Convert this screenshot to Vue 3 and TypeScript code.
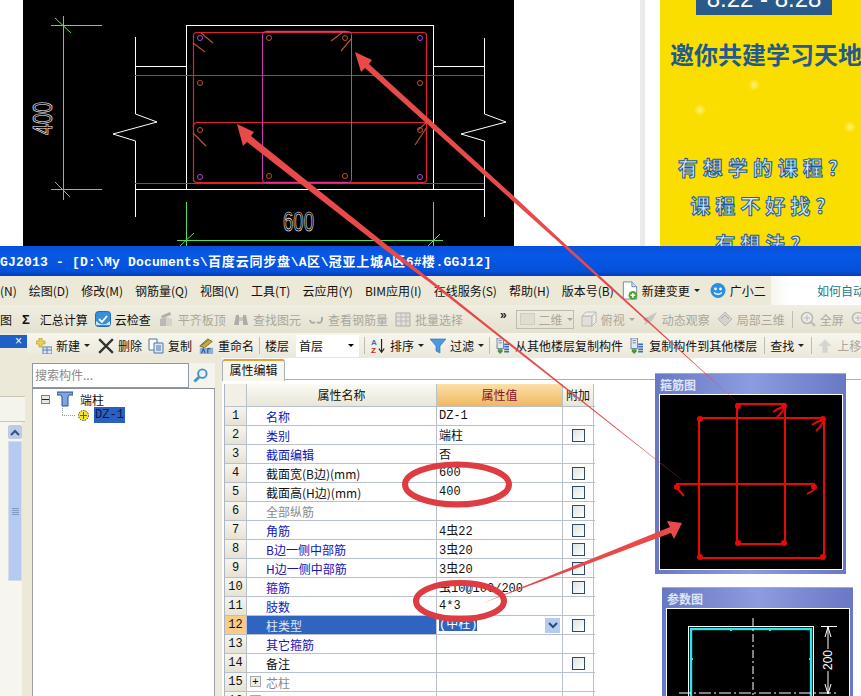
<script setup lang="ts">
interface Tool { icon?: string; label?: string; caret?: boolean; off?: boolean; sep?: boolean; wide?: boolean; nudge?: boolean }
interface Row { n: number; name: string; val?: string; check?: boolean; kind?: string; tree?: boolean }

const menus = ['(N)', '绘图(D)', '修改(M)', '钢筋量(Q)', '视图(V)', '工具(T)', '云应用(Y)', 'BIM应用(I)', '在线服务(S)', '帮助(H)', '版本号(B)']

const toolsA: Tool[] = [
  { icon: 'i-cloud', label: '云检查' },
  { icon: 'i-level', label: '平齐板顶', off: true },
  { icon: 'i-bino', label: '查找图元', off: true },
  { icon: 'i-link', label: '查看钢筋量', off: true },
  { icon: 'i-batch', label: '批量选择', off: true }
]
const toolsB: Tool[] = [
  { icon: 'i-box', label: '俯视', caret: true, off: true },
  { icon: 'i-rocket', label: '动态观察', off: true },
  { icon: 'i-gem', label: '局部三维', off: true },
  { sep: true },
  { icon: 'i-zoom', label: '全屏', off: true },
  { icon: 'i-zoom', off: true }
]
const toolsC: Tool[] = [
  { icon: 'i-new', label: '新建', caret: true },
  { icon: 'i-x', label: '删除', nudge: true },
  { icon: 'i-copy', label: '复制' },
  { icon: 'i-rename', label: '重命名' },
  { sep: true },
  { label: '楼层' }
]
const toolsD: Tool[] = [
  { sep: true },
  { icon: 'i-az', label: '排序', caret: true },
  { icon: 'i-funnel', label: '过滤', caret: true },
  { sep: true },
  { icon: 'i-from', label: '从其他楼层复制构件' },
  { icon: 'i-from', label: '复制构件到其他楼层' },
  { sep: true, wide: true },
  { label: '查找', caret: true },
  { sep: true, wide: true },
  { icon: 'i-up', label: '上移', off: true }
]

const rows: Row[] = [
  { n: 1, name: '名称', val: 'DZ-1', kind: 'blue' },
  { n: 2, name: '类别', val: '端柱', check: true, kind: 'blue' },
  { n: 3, name: '截面编辑', val: '否', kind: 'blue' },
  { n: 4, name: '截面宽(B边)(mm)', val: '600', check: true },
  { n: 5, name: '截面高(H边)(mm)', val: '400', check: true },
  { n: 6, name: '全部纵筋', check: true, kind: 'gray' },
  { n: 7, name: '角筋', val: '4虫22', check: true, kind: 'blue' },
  { n: 8, name: 'B边一侧中部筋', val: '3虫20', check: true, kind: 'blue' },
  { n: 9, name: 'H边一侧中部筋', val: '3虫20', check: true, kind: 'blue' },
  { n: 10, name: '箍筋', val: '虫10@100/200', check: true, kind: 'blue' },
  { n: 11, name: '肢数', val: '4*3', kind: 'blue' },
  { n: 12, name: '柱类型', val: '(中柱)', check: true, kind: 'sel' },
  { n: 13, name: '其它箍筋', kind: 'blue' },
  { n: 14, name: '备注', check: true },
  { n: 15, name: '芯柱', kind: 'gray', tree: true },
  { n: 16, name: '', tree: true }
]

const purpleBars = [[200, 38], [420, 38], [200, 177], [420, 177]]
const orangeBars = [[269, 38], [345, 38], [200, 83], [420, 83], [200, 130], [420, 130], [269, 176], [345, 176]]
const hooks = [
  'M201 33 L213 43', 'M193 43 L205 52', 'M343 32 L331 41', 'M352 38 L341 51',
  'M193 133 L206 146', 'M427 127 L415 145', 'M427 122 L418 130'
]
const dots = [[40, 24], [163, 24], [40, 162], [163, 162], [78, 11], [124, 11], [78, 148], [124, 148], [17, 92], [154, 92]]
</script>

<template>
  <div class="page">
    <svg class="defs" width="0" height="0">
      <symbol id="i-doc" viewBox="0 0 16 20"><path d="M1 1h9l5 5v13H1z" fill="#fff" stroke="#6c86b0"/><path d="M10 1v5h5" fill="#cfe0f5" stroke="#6c86b0"/><circle cx="11" cy="15" r="4.5" fill="#4da32f"/><path d="M8.5 15h5M11 12.5v5" stroke="#fff" stroke-width="1.6"/></symbol>
      <symbol id="i-face" viewBox="0 0 16 16"><circle cx="8" cy="8" r="7.5" fill="#2b8fe0"/><circle cx="5.5" cy="6.5" r="1.4" fill="#fff"/><circle cx="10.5" cy="6.5" r="1.4" fill="#fff"/><path d="M4 10q4 3.5 8 0" stroke="#fff" fill="none" stroke-width="1.3"/></symbol>
      <symbol id="i-cloud" viewBox="0 0 16 16"><rect x=".5" y=".5" width="15" height="15" rx="3" fill="#3a8fdc" stroke="#1d6cb8"/><path d="M1 10q7 7 14 0v4H1z" fill="#cfe6fa"/><path d="M4 8l3 3 5-6" stroke="#fff" stroke-width="1.8" fill="none"/></symbol>
      <symbol id="i-level" viewBox="0 0 16 16"><path d="M2 15V8l6-2v9z" fill="#aaa"/><path d="M8 15V6l6 2v7z" fill="#ccc"/><path d="M3 5l9-4 1 3-9 3z" fill="#999"/></symbol>
      <symbol id="i-bino" viewBox="0 0 16 16"><path d="M1 14l2-10h3v10zM10 14V4h3l2 10z" fill="#999"/><rect x="6" y="6" width="4" height="4" fill="#bbb"/></symbol>
      <symbol id="i-link" viewBox="0 0 16 16"><path d="M2 9a3 3 0 0 0 5 2M14 6v3a3 3 0 0 1-5 2" stroke="#999" stroke-width="2" fill="none"/></symbol>
      <symbol id="i-batch" viewBox="0 0 16 16"><path d="M1 2h14v13H1z" fill="#ddd" stroke="#999"/><path d="M1 6h14M1 10h14M6 2v13M11 2v13" stroke="#aaa"/></symbol>
      <symbol id="i-box" viewBox="0 0 16 16"><path d="M1 5h10v10H1z" fill="#ddd" stroke="#aaa"/><path d="M1 5l4-4h10l-4 4zM11 5l4-4v10l-4 4z" fill="#eee" stroke="#aaa"/></symbol>
      <symbol id="i-rocket" viewBox="0 0 16 16"><path d="M15 1L6 6l-4 8 8-4z" fill="#bbb"/><path d="M1 8l5-2-2 5z" fill="#999"/></symbol>
      <symbol id="i-gem" viewBox="0 0 16 16"><path d="M1 8l7-7 7 7-7 7z" fill="#ccc" stroke="#aaa"/><path d="M4 8l4-4 4 4" fill="none" stroke="#999"/></symbol>
      <symbol id="i-zoom" viewBox="0 0 16 16"><circle cx="7" cy="7" r="5.5" fill="#eee" stroke="#aaa" stroke-width="1.6"/><path d="M11 11l4 4" stroke="#aaa" stroke-width="2"/><path d="M4 7h6M7 4v6" stroke="#aaa"/></symbol>
      <symbol id="i-new" viewBox="0 0 16 16"><path d="M6 0h3v3h3v3H9v3H6V6H3V3h3z" transform="translate(-3 0)" fill="#f0d24a" stroke="#a98f20" stroke-width=".6"/><rect x="7" y="9" width="9" height="7" fill="#dce8f6" stroke="#5d7fae"/><path d="M7 12h9M11 9v7" stroke="#5d7fae"/></symbol>
      <symbol id="i-x" viewBox="0 0 14 14"><path d="M1 1l12 12M13 1L1 13" stroke="#333" stroke-width="2"/></symbol>
      <symbol id="i-copy" viewBox="0 0 16 16"><path d="M1 1h8v11H1z" fill="#fff" stroke="#4f74a8"/><path d="M6 5h9v10H6z" fill="#dce8f6" stroke="#4f74a8"/><path d="M8 8h5M8 10h5M8 12h5" stroke="#4f74a8"/></symbol>
      <symbol id="i-rename" viewBox="0 0 16 18"><path d="M1 9l9-8 5 3-9 7z" fill="#c9a93a" stroke="#7a6a20"/><path d="M3 8l8-6" stroke="#3d8a3d"/><rect x="1" y="11" width="15" height="7" fill="#8fb0d8"/><path d="M3 17l2-5 2 5M10 17v-5h3" stroke="#203a70" fill="none"/></symbol>
      <symbol id="i-az" viewBox="0 0 16 18"><text x="0" y="8" font-size="9" font-family="Liberation Sans" font-weight="700" fill="#3a6fc0">A</text><text x="0" y="17" font-size="9" font-family="Liberation Sans" font-weight="700" fill="#b03030">Z</text><path d="M12 1v14M9 12l3 4 3-4" stroke="#222" stroke-width="1.3" fill="none"/></symbol>
      <symbol id="i-funnel" viewBox="0 0 16 16"><path d="M0 1h16l-6 7v7l-4-2V8z" fill="#4a9ae0" stroke="#2a6cb0" stroke-width=".6"/></symbol>
      <symbol id="i-from" viewBox="0 0 17 20"><rect x="1" y="0" width="8" height="13" fill="#dfe7f3" stroke="#5d6f8e"/><path d="M3 3h4M3 6h4" stroke="#5d6f8e"/><path d="M10 8h6M10 11h6M10 14h6M10 17h6" stroke="#3c6cb0" stroke-width="2"/><path d="M2 14h6v3l-3 3-3-3z" fill="#3d9a3d"/></symbol>
      <symbol id="i-up" viewBox="0 0 12 12"><path d="M6 1l5 5H8v5H4V6H1z" fill="#ccc"/></symbol>
      <symbol id="i-search" viewBox="0 0 16 16"><circle cx="10" cy="6" r="4.5" fill="#e8f4fc" stroke="#3f90cf" stroke-width="2"/><path d="M6.5 9.5L1.5 14.5" stroke="#3f90cf" stroke-width="3"/></symbol>
    </svg>

    <div class="backdrop">
      <svg class="cad" viewBox="23 0 491 246" width="491" height="246">
        <g stroke="#fff" stroke-width="1" fill="none">
          <rect x="186.5" y="25.5" width="247" height="164" />
          <path d="M135.5 37V114L157 122 113 134 135.500 141V217" />
          <path d="M484.500 38V114L506 122 461 134 484.500 141V217" />
          <path d="M135 66.500H186M433 66.500H484M135 189.500H484" />
        </g>
        <g stroke="#55e055" stroke-width="1" fill="none">
          <path d="M63.500 16V200M51 25.500H102M51 189.500H102M55 18L71 33M55 182L70 197" />
          <path d="M186.500 202V246M433.500 202V246M177 240.500H443M180 246L194 233M428 246L440 234" />
        </g>
        <g stroke="#e0202c" stroke-width="1.200" fill="none">
          <rect x="193.500" y="32.500" width="233" height="150" rx="3" />
          <path d="M135 75.500H484M197 122.500H427M135 183.500H484" />
          <path d="M193 127Q194 122 199 122" />
          <path v-for="h in hooks" :key="h" :d="h" stroke="#b8503a" />
        </g>
        <rect x="262.500" y="31.500" width="89" height="151" rx="3" fill="none" stroke="#c83cb4" stroke-width="1" />
        <path d="M266 31.500H346M266 182.500H346" stroke="#f02c90" stroke-width="1.400" />
        <circle v-for="b in purpleBars" :key="'p' + b[0] + b[1]" :cx="b[0]" :cy="b[1]" r="2.500" fill="none" stroke="#a84ce0" stroke-width="1" />
        <circle v-for="b in orangeBars" :key="'o' + b[0] + b[1]" :cx="b[0]" :cy="b[1]" r="2.500" fill="none" stroke="#c8502c" stroke-width="1" />
        <text class="cad-text" x="283" y="231" textLength="31" lengthAdjust="spacingAndGlyphs">600</text>
        <text class="cad-text" transform="translate(52 135) rotate(-90)" x="0" y="0" textLength="33" lengthAdjust="spacingAndGlyphs">400</text>
      </svg>
      <div class="stripe"></div>
      <div class="ad">
        <div class="ad-date"><span>8.22 - 8.28</span></div>
        <div class="ad-head">邀你共建学习天地</div>
        <div class="ad-q first">有想学的课程?</div>
        <div class="ad-q">课程不好找?</div>
        <div class="ad-q">有想法?</div>
      </div>
    </div>

    <div class="window">
      <div class="title"><span class="lat">GJ2013 - [D:\My Documents\</span><span class="han">百度云同步盘</span><span class="lat">\A</span><span class="han">区</span><span class="lat">\</span><span class="han">冠亚上城</span><span class="lat">A</span><span class="han">区</span><span class="lat">6#</span><span class="han">楼</span><span class="lat">.GGJ12]</span></div>

      <div class="menubar">
        <div class="menu-left">
          <span v-for="m in menus" :key="m">{{ m }}</span>
          <span class="tool change"><svg class="ic big"><use href="#i-doc" /></svg>新建变更<i class="caret"></i></span>
          <span class="tool helper"><svg class="ic big"><use href="#i-face" /></svg>广小二</span>
        </div>
        <div class="menu-right">如何自动</div>
      </div>

      <div class="bar bar-a">
        <span>图</span>
        <span class="sigma">Σ</span>
        <span>汇总计算</span>
        <span v-for="t in toolsA" :key="t.label" class="tool" :class="{ off: t.off }">
          <svg class="ic"><use :href="'#' + t.icon" /></svg>{{ t.label }}
        </span>
        <span class="more">»</span>
        <span class="combo off"><i class="swatch"></i>二维<i class="caret"></i></span>
        <template v-for="(t, i) in toolsB" :key="i">
          <i v-if="t.sep" class="sep"></i>
          <span v-else class="tool" :class="{ off: t.off }">
            <svg class="ic"><use :href="'#' + t.icon" /></svg>{{ t.label }}<i v-if="t.caret" class="caret"></i>
          </span>
        </template>
      </div>

      <div class="bar-b-wrap">
        <div class="strip-tab"><span>×</span></div>
        <div class="bar bar-b">
          <template v-for="(t, i) in toolsC" :key="i">
            <i v-if="t.sep" class="sep"></i>
            <span v-else class="tool" :class="{ nudge: t.nudge }">
              <svg v-if="t.icon" class="ic"><use :href="'#' + t.icon" /></svg>{{ t.label }}<i v-if="t.caret" class="caret"></i>
            </span>
          </template>
          <span class="floor">首层<i class="caret dark"></i></span>
          <template v-for="(t, i) in toolsD" :key="'d' + i">
            <i v-if="t.sep" class="sep" :class="{ wide: t.wide }"></i>
            <span v-else class="tool" :class="{ off: t.off }">
              <svg v-if="t.icon" class="ic"><use :href="'#' + t.icon" /></svg>{{ t.label }}<i v-if="t.caret" class="caret"></i>
            </span>
          </template>
        </div>
      </div>

      <div class="main">
        <div class="strip">
          <div class="strip-band"></div>
          <div class="strip-body">
            <div class="scroll">
              <div class="scroll-btn"><svg width="10" height="7" viewBox="0 0 10 7"><path d="M1 6l4-4 4 4" fill="none" stroke="#3a4f80" stroke-width="2" /></svg></div>
              <div class="scroll-thumb"><i></i></div>
            </div>
          </div>
        </div>

        <div class="tree-col">
          <div class="search">
            <div class="search-box">搜索构件...</div>
            <svg class="search-ic"><use href="#i-search" /></svg>
          </div>
          <div class="tree">
            <div class="node">
              <span class="minus"></span>
              <svg width="16" height="16" viewBox="0 0 16 16"><path d="M0 1h16v3h-4l-1 2v9H5V6L4 4H0z" fill="#7ea6e0" stroke="#2c4f96" /></svg>
              <span>端柱</span>
            </div>
            <div class="node leaf">
              <i class="dotted"></i>
              <svg width="11" height="11" viewBox="0 0 11 11"><circle cx="5.500" cy="5.500" r="5" fill="#f3e820" stroke="#443" stroke-dasharray="1.500 1" /><path d="M5.500 2v7M2 5.500h7" stroke="#554" /></svg>
              <span class="picked">DZ-1</span>
            </div>
          </div>
        </div>

        <div class="props">
          <div class="tabs"><div class="tab">属性编辑</div></div>
          <div class="grid">
            <div class="hrow">
              <div class="c-n head"></div>
              <div class="c-name head">属性名称</div>
              <div class="c-val head val-head">属性值</div>
              <div class="c-add head">附加</div>
            </div>
            <div v-for="r in rows" :key="r.n" class="row" :class="r.kind">
              <div class="c-n">{{ r.n }}</div>
              <div class="c-name">
                <span v-if="r.tree" class="plus">+</span>
                <span class="nm">{{ r.name }}</span>
              </div>
              <div class="c-val">
                <span class="vtxt">{{ r.val }}</span>
                <span v-if="r.kind === 'sel'" class="drop"><svg width="10" height="7" viewBox="0 0 10 7"><path d="M1 1l4 4 4-4" fill="none" stroke="#2a4a80" stroke-width="2" /></svg></span>
              </div>
              <div class="c-add"><i v-if="r.check" class="box"></i></div>
            </div>
          </div>

          <div class="float rebar">
            <div class="float-title">箍筋图</div>
            <svg class="float-view" viewBox="0 0 182 174" width="182" height="174">
              <g stroke="#e80808" stroke-width="2" fill="none">
                <rect x="39" y="23" width="125" height="140" />
                <rect x="77" y="9" width="48" height="140" />
                <path d="M16 89H155" />
                <path d="M18 94L24 101M154 95L147 99M124 12Q118 13 113 17M124 14Q121 19 117 22M163 25Q157 26 152 30M163 27Q160 33 156 36" />
              </g>
              <circle v-for="d in dots" :key="d[0] + '-' + d[1]" :cx="d[0]" :cy="d[1]" r="3" fill="#e80808" />
            </svg>
          </div>

          <div class="float param">
            <div class="float-title">参数图</div>
            <svg class="float-view" viewBox="0 0 182 90" width="182" height="90">
              <rect x="21.500" y="17.500" width="125" height="120" fill="none" stroke="#fff" />
              <rect x="24" y="20" width="120" height="120" fill="none" stroke="#2fe6e6" stroke-width="2.400" />
              <path d="M86 9V90" stroke="#fff" stroke-dasharray="8 3 2 3" />
              <path d="M12 84H170" stroke="#fff" stroke-dasharray="12 3 2 3" />
              <path d="M154 17.500H170M161 17V85M158 28l3-10 3 10M158 75l3 10 3-10" stroke="#fff" fill="none" />
              <path d="M64 20v2M103 20v2M144 50h-2M24 50h2" stroke="#2fe6e6" stroke-width="2" />
              <rect x="155" y="40" width="12" height="22" fill="#000" />
              <text class="dim" transform="translate(165 61) rotate(-90)">200</text>
            </svg>
          </div>
        </div>
      </div>
    </div>

    <svg class="marks" viewBox="0 0 861 696" width="861" height="696">
      <g fill="#e84a4a">
        <path d="M355 52L372 60 369 64 518 200 564 243 740 405 563 246 516 204 365 68 361 72z" />
        <path d="M237 124L254 132 251 136 387 245 431 280 692 488 429 282 384 249 247 142 243 146z" />
        <path d="M682 523L674 539 671 533 483 603 670 527 667 521z" />
      </g>
      <g fill="none" stroke="#dc3c42" stroke-width="6">
        <ellipse cx="457" cy="484.500" rx="52" ry="20" />
        <ellipse cx="460" cy="601" rx="44" ry="18" />
      </g>
    </svg>
  </div>
</template>

<style>
html, body { margin: 0; padding: 0; background: #fff; overflow: hidden; }
</style>

<style scoped>
.page { position: relative; width: 861px; height: 696px; overflow: hidden; display: flex; flex-direction: column; font: 12px "Noto Sans CJK SC", "Liberation Sans", sans-serif; color: #111; background: #fff; }
.defs { position: absolute; }
.backdrop { height: 246px; flex: none; display: flex; background: #fff; }
.cad { display: block; margin-left: 23px; background: #000; flex: none; }
.cad-text { font: 27px "Liberation Sans", sans-serif; fill: none; stroke: #fff; stroke-width: .7; }
.stripe { width: 5px; margin-left: 126px; background: #eaeaea; }
.ad { margin-left: 15px; flex: 1; overflow: hidden; background: radial-gradient(circle at 40px 110px, #fff27a 0, transparent 6px), radial-gradient(circle at 94px 85px, #fff27a 0, transparent 6px), radial-gradient(circle at 190px 127px, #fff27a 0, transparent 6px), #fade00; display: flex; flex-direction: column; align-items: center; }
.ad-date { align-self: flex-start; margin-left: 36px; width: 136px; height: 15px; flex: none; background: #2a5a8c; color: #fff; font: 24px/1 "Liberation Sans", sans-serif; text-align: center; overflow: hidden; }
.ad-date span { display: block; margin-top: -13px; }
.ad-head { align-self: flex-start; margin: 23px 0 0 10px; white-space: nowrap; font-size: 24px; line-height: 32px; font-weight: 700; color: #22598e; }
.ad-q { font-size: 20px; line-height: 28px; letter-spacing: 5px; font-weight: 700; color: #d4e8f6; -webkit-text-stroke: 1px #235a8e; margin-top: 10px; white-space: nowrap; flex: none; }
.ad-q.first { margin-top: 84px; }

.window { flex: 1; display: flex; flex-direction: column; min-height: 0; background: #fff; }
.title { height: 30px; flex: none; background: linear-gradient(#0a50d8, #0858e8 30%, #0450d8 85%, #0a3cb0); color: #fff; font: 700 13px/33px "Liberation Mono", "Noto Sans CJK SC", monospace; white-space: nowrap; }
.lat { letter-spacing: .2px; }
.han { letter-spacing: .8px; }

.menubar { height: 29px; flex: none; display: flex; background: #fff; }
.menu-left { width: 771px; flex: none; background: #ece9d8; display: flex; align-items: center; gap: 12px; white-space: nowrap; }
.menu-right { padding: 0 0 0 46px; line-height: 29px; color: #1b7a86; white-space: nowrap; background: linear-gradient(90deg, #f6f5ee, #fff 20%); flex: 1; }
.change { margin-left: -4px; }
.helper { margin-left: -2px; }
.bar { flex: none; display: flex; align-items: center; white-space: nowrap; }
.bar-a { height: 28px; background: linear-gradient(#f0eee2, #e4e1d0); gap: 7px; }
.bar-b-wrap { height: 25px; flex: none; display: flex; background: #ece9d8; }
.bar-b { flex: 1; height: 25px; padding-left: 9px; background: linear-gradient(#f7f6ee, #ebe8da); gap: 6px; }
.sigma { font: 700 13px "Liberation Sans", sans-serif; margin: 0 3px; }
.tool { display: inline-flex; align-items: center; gap: 4px; }
.nudge { margin-left: 2px; }
.tool.off { color: #a9a79c; }
.tool.off svg { opacity: .75; }
.ic { width: 16px; height: 16px; flex: none; }
.ic.big { height: 19px; }
.caret { display: inline-block; width: 0; height: 0; border: 3px solid transparent; border-top: 3px solid #222; border-bottom: 0; }
.off .caret { border-top-color: #a9a79c; }
.more { font: 700 12px "Liberation Sans", sans-serif; margin: -8px 0 0 30px; color: #222; }
.combo { width: 62px; height: 19px; margin-left: 2px; box-sizing: border-box; border: 1px solid #bdbcb0; display: flex; align-items: center; gap: 4px; padding-left: 3px; color: #a9a79c; }
.swatch { width: 13px; height: 10px; background: #dfddd0; border: 1px solid #cfcdc0; }
.sep { width: 1px; height: 17px; background: #bfbdb0; flex: none; }
.bar-b .sep { margin: 0 -1px; }
.bar-b .sep.wide { margin-left: 1px; }
.floor { width: 63px; height: 22px; box-sizing: border-box; background: #fff; display: flex; align-items: center; justify-content: space-between; padding: 0 5px 0 3px; margin-left: 1px; flex: none; }
.caret.dark { border-top-color: #000; }

.main { flex: 1; min-height: 0; display: flex; background: #ece9d8; }
.strip { width: 25px; flex: none; display: flex; flex-direction: column; }
.strip-tab { width: 27px; height: 13px; margin-top: 2px; flex: none; box-sizing: border-box; background: #1f5fc8; color: #fff; text-align: right; padding-right: 5px; font: 12px/13px "Liberation Sans", sans-serif; }
.strip-band { height: 26px; margin-top: 38px; flex: none; box-sizing: border-box; border-top: 1px solid #c9c6b6; border-bottom: 1px solid #c9c6b6; background: #f4f3ec; }
.strip-body { flex: 1; margin-right: 3px; background: #f6f5ee; padding: 3px 0 0 8px; }
.scroll { width: 14px; }
.scroll-btn { height: 14px; background: #bccbea; display: flex; align-items: center; justify-content: center; border-radius: 2px; }
.scroll-thumb { height: 140px; margin-top: 2px; background: #b6c9f0; border: 1px solid #d5dcec; box-sizing: border-box; display: flex; align-items: center; justify-content: center; }
.scroll-thumb i { width: 7px; height: 7px; background: repeating-linear-gradient(#8097c8 0 1px, transparent 1px 2px); }
.tree-col { width: 183px; margin-left: 7px; margin-right: 7px; flex: none; display: flex; flex-direction: column; padding-top: 5px; }
.search { height: 25px; display: flex; background: #f4f3ec; flex: none; border-bottom: 1px solid #8a8f9c; }
.search-box { width: 157px; box-sizing: border-box; background: #fff; border: 1px solid #8e98a8; color: #8a8a8a; padding-left: 2px; line-height: 22px; font-size: 12px; }
.search-ic { width: 15px; height: 15px; margin: 5px 0 0 4px; }
.tree { flex: 1; background: #fff; border-left: 1px solid #9ca1ac; border-right: 1px solid #9ca1ac; padding: 2px 0 0 8px; }
.node { display: flex; align-items: center; gap: 7px; height: 16px; font-size: 12px; }
.minus { width: 9px; height: 9px; box-sizing: border-box; border: 1px solid #808080; background: linear-gradient(transparent 3px, #222 3px, #222 4px, transparent 4px), #e8e8e2; }
.leaf { margin-left: 21px; gap: 5px; }
.leaf svg { flex: none; }
.dotted { position: relative; width: 14px; height: 1px; margin-right: -3px; background: repeating-linear-gradient(90deg, #999 0 1px, transparent 1px 2px); }
.dotted::before { content: ""; position: absolute; left: 0; bottom: 0; width: 1px; height: 8px; background: repeating-linear-gradient(#999 0 1px, transparent 1px 2px); }
.picked { background: #2a61c0; color: #0b1744; font: 12px/16px "Liberation Mono", monospace; width: 31px; text-align: center; }

.props { position: relative; flex: 1; min-width: 0; background: #fff; }
.tabs { height: 22px; box-sizing: border-box; border-bottom: 1px solid #a9b0bd; display: flex; }
.tab { width: 63px; height: 22px; box-sizing: border-box; border: 1px solid #a9b0bd; border-top: 2px solid #e8a030; border-bottom: 0; border-radius: 3px 3px 0 0; background: #f6f5ee; text-align: center; line-height: 18px; margin-top: 1px; }
.grid { width: 370px; margin: 4px 0 0 2px; border-left: 1px solid #a9b5c4; }
.hrow { display: flex; height: 23px; border-bottom: 1px solid #b8c0cc; box-sizing: border-box; }
.row { display: flex; height: 19px; box-sizing: border-box; border-bottom: 1px solid #b8c0cc; }
.c-n { width: 21px; flex: none; background: linear-gradient(#f6f5ee, #e6e3d4); text-align: center; border-right: 1px solid #b8c0cc; font: 12px/18px "Liberation Mono", monospace; }
.c-name { width: 190px; flex: none; box-sizing: border-box; display: flex; align-items: center; padding-left: 19px; position: relative; border-right: 1px solid #b8c0cc; }
.c-val { width: 126px; flex: none; box-sizing: border-box; display: flex; align-items: center; padding-left: 2px; border-right: 1px solid #b8c0cc; font: 12px "Liberation Mono", "Noto Sans CJK SC", monospace; white-space: nowrap; overflow: hidden; position: relative; }
.c-add { width: 31px; flex: none; box-sizing: border-box; display: flex; align-items: center; justify-content: center; border-right: 1px solid #b8c0cc; }
.head { background: linear-gradient(#fbfaf4, #e8e6d8); text-align: center; line-height: 22px; font-size: 12px; padding: 0; display: block; }
.c-n.head { background: #f1efe6; }
.val-head { background: linear-gradient(#fbe0a8, #f0b860); color: #8a1030; font-family: "Noto Sans CJK SC", sans-serif; }
.nm { font-size: 12px; white-space: nowrap; }
.blue .nm { color: #1414b8; }
.gray .nm { color: #8a8a8a; }
.sel .c-n { background: #f7cc8a; }
.sel .c-name { background: #2f65c0; }
.sel .nm { color: #dfe8f8; }
.sel .vtxt { background: #2f65c0; color: #fff; line-height: 12px; }
.drop { position: absolute; right: 2px; top: 2px; width: 15px; height: 15px; background: #b6cbf0; display: flex; align-items: center; justify-content: center; }
.box { display: block; width: 11px; height: 11px; border: 1px solid #2e4a6a; background: linear-gradient(135deg, #dfe3dc, #fff); }
.plus { position: absolute; left: 3px; top: 3px; width: 11px; height: 11px; box-sizing: border-box; border: 1px solid #aaa; background: #f0efe6; font: 11px/9px "Liberation Sans", sans-serif; text-align: center; color: #000; }
.float { position: absolute; width: 191px; box-sizing: border-box; padding: 0 5px 5px; background: linear-gradient(90deg, #6878c4, #8c9ce0 50%, #6878c4); border-top: 1px solid #9aa8dc; }
.rebar { left: 433px; top: 15px; height: 201px; }
.param { left: 440px; top: 229px; height: 120px; }
.float-title { height: 21px; color: #dfe5f6; font-size: 12px; font-weight: 700; line-height: 21px; }
.float-view { display: block; background: #000; outline: 1px solid #fff; }
.dim { font: 12px "Liberation Sans", sans-serif; fill: #fff; }
.marks { position: absolute; left: 0; top: 0; pointer-events: none; }
</style>
